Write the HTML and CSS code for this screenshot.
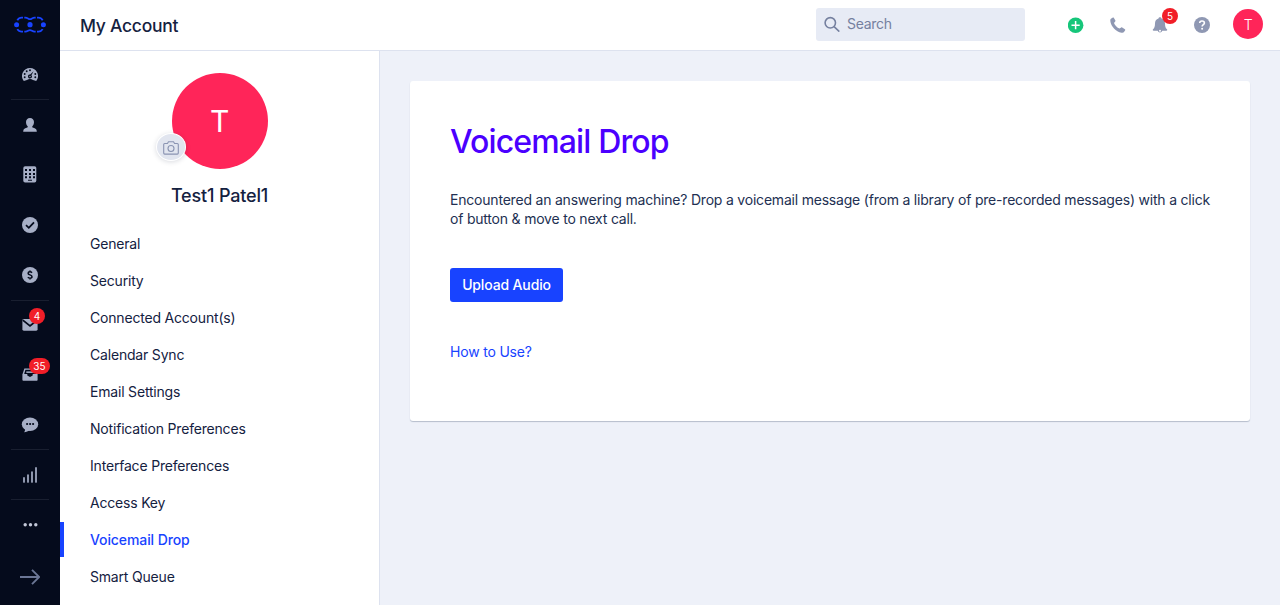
FILE: index.html
```html
<!DOCTYPE html>
<html lang="en">
<head>
<meta charset="utf-8">
<title>My Account</title>
<link rel="stylesheet" href="styles.css">
</head>
<body>
<div class="app">
  <nav class="rail">
    <a class="rail-item logo"><svg width="34" height="18" viewBox="0 0 34 18" fill="none" stroke="#1843ff" stroke-width="1.800"><path d="M4.300 4.200C5.500 2.200 6.600 1.600 8.600 1.600H10M11.300 1.600h1.200c2.200 0 2.700 1.600 4.500 1.600s2.300-1.600 4.500-1.600h1.200M24 1.600h1.400c2 0 3.100.6 4.300 2.600M4.300 13.100c1.200 2 2.300 2.600 4.300 2.600H10M11.300 15.700h1.200c2.200 0 2.700-1.600 4.500-1.600s2.300 1.600 4.500 1.600h1.200M24 15.700h1.400c2 0 3.100-.6 4.300-2.600"/><g fill="#1843ff" stroke="none"><circle cx="3.600" cy="8.700" r="2.500"/><circle cx="17" cy="8.700" r="2.600"/><circle cx="30.400" cy="8.700" r="2.500"/></g></svg></a>
    <a class="rail-item divided"><svg width="16" height="16" viewBox="0 0 16 16"><path fill="#a7afc6" d="M8 1a8 8 0 0 0-6.200 13L5 13.100a4.800 4.800 0 0 1 6 0l3.200.9A8 8 0 0 0 8 1z"/><g fill="#050b1c"><circle cx="8" cy="3.200" r=".95"/><circle cx="4.700" cy="4.300" r=".95"/><circle cx="2.700" cy="7" r=".95"/><circle cx="2.700" cy="10.300" r=".95"/><circle cx="13.300" cy="7" r=".95"/><circle cx="13.300" cy="10.300" r=".95"/><path d="M11.600 4.200 9.400 8.300a1.900 1.900 0 1 1-1.200-.7z"/></g><circle cx="8" cy="9.500" r=".7" fill="#a7afc6"/></svg></a>
    <a class="rail-item"><svg width="16" height="16" viewBox="0 0 16 16" fill="#a7afc6"><path d="M8 1c2.500 0 4 1.700 4 4.100 0 1.700-.6 3.300-1.700 4.200v1c0 .5 3.300.8 4.100 2.400.3.600.4 1.300.4 2H1.200c0-.7.100-1.400.4-2 .8-1.600 4.100-1.900 4.100-2.400v-1C4.600 8.400 4 6.800 4 5.100 4 2.700 5.500 1 8 1z"/></svg></a>
    <a class="rail-item"><svg width="16" height="18" viewBox="0 0 16 18"><rect x="1.300" y=".3" width="13" height="16.200" rx="1.800" fill="#a7afc6"/><g fill="#050b1c"><path d="M3 3h2v2H3zM7 3h2v2H7zM11 3h2v2h-2zM3 7h2v2H3zM7 7h2v2H7zM11 7h2v2h-2zM3 10.300h2v2H3zM7 10.300h2v2H7zM11 10.300h2v2h-2zM6 13.700h4v1H6z"/></g></svg></a>
    <a class="rail-item"><svg width="16" height="16" viewBox="0 0 16 16"><circle cx="8" cy="8" r="8" fill="#a7afc6"/><path d="M4 8.200l2.800 2.600L12 5.300" fill="none" stroke="#050b1c" stroke-width="1.800"/></svg></a>
    <a class="rail-item"><svg width="16" height="16" viewBox="0 0 16 16"><circle cx="8" cy="8" r="8" fill="#a7afc6"/><path d="M10 5.700C9.400 5 8.800 4.800 8 4.800c-1.200 0-1.900.6-1.900 1.400C6.100 8.300 10 7.500 10 9.800c0 .8-.8 1.400-2 1.400-.9 0-1.600-.3-2.200-.9M8 3.400v1.500M8 11v1.600" fill="none" stroke="#050b1c" stroke-width="1.500"/></svg></a>
    <a class="rail-item top-line"><svg width="16" height="16" viewBox="0 0 16 16"><rect x=".4" y="2" width="15.200" height="11.700" rx="1.400" fill="#a7afc6"/><path d="M.8 3.100 8 8.900l7.200-5.800" fill="none" stroke="#050b1c" stroke-width="1.800"/></svg><span class="badge">4</span></a>
    <a class="rail-item"><svg width="16" height="16" viewBox="0 0 16 16"><path fill="#a7afc6" d="M2.400 1.500h11.200l2 6v5.200c0 .6-.4 1-1 1H1.300c-.6 0-.9-.4-.9-1V7.500z"/><path fill="#050b1c" d="M3.400 2.800h9.500l1.200 4.200h-3.400v1.400L8 10 5.300 8.400V7H2.200z"/><path fill="#a7afc6" d="M4.300 4.400h8.400v1.500H4.300z"/></svg><span class="badge wide">35</span></a>
    <a class="rail-item"><svg width="18" height="16" viewBox="0 0 18 16"><ellipse cx="9" cy="7.200" rx="8.200" ry="6.800" fill="#a7afc6"/><path fill="#a7afc6" d="M4 11.500c.2 1.700-.2 2.800-.9 3.700 2.400-.2 4-.9 5.300-2z"/><g fill="#050b1c"><circle cx="6.100" cy="7" r="1.100"/><circle cx="9.100" cy="7" r="1.100"/><circle cx="12.100" cy="7" r="1.100"/></g></svg></a>
    <a class="rail-item framed"><svg width="16" height="16" viewBox="0 0 16 16" fill="none" stroke="#a7afc6" stroke-width="1.700" stroke-linecap="round"><path d="M2 10.900V15M6 8v7M10 5v10M14 .9V15"/></svg></a>
    <a class="rail-item"><svg width="16" height="6" viewBox="0 0 16 6" fill="#c3c8d8"><circle cx="3.200" cy="2.700" r="1.700"/><circle cx="8.500" cy="2.700" r="1.700"/><circle cx="13.800" cy="2.700" r="1.700"/></svg></a>
    <a class="rail-item arrow"><svg width="20" height="16" viewBox="0 0 20 16" fill="none" stroke="#6b7695" stroke-width="1.900"><path d="M0 8h19M12 .8 19.200 8 12 15.200"/></svg></a>
  </nav>
  <div class="main">
    <header class="topbar">
      <h1 class="page-title">My Account</h1>
      <div class="search"><svg width="16" height="16" viewBox="0 0 16 16" fill="none" stroke="#75809f" stroke-width="1.600"><circle cx="6.300" cy="6.800" r="5.200"/><path d="M10.100 10.600l5.200 5"/></svg><span class="placeholder">Search</span></div>
      <div class="actions">
        <a class="action"><svg width="16" height="16" viewBox="0 0 16 16"><circle cx="7.600" cy="8.200" r="7.800" fill="#16c67a"/><path d="M3.500 8.200h8.200M7.600 4.100v8.200" stroke="#fff" stroke-width="1.500"/></svg></a>
        <a class="action"><svg width="16" height="16" viewBox="0 0 16 16" fill="#8f98b3"><path d="M.9 1.800 2.900.6c.4-.2.800-.1 1 .3l1.500 2.700c.2.400.1.800-.2 1L4 5.900c.9 2.400 3 4.700 5.600 5.700l1.600-1.100c.3-.2.700-.2 1 0l2.700 1.800c.4.200.5.600.3.900l-1.200 1.900c-.4.600-1.300.8-2.500.6C5.900 14.700.9 9.300.3 3.900c-.1-1 .1-1.700.6-2.100z"/></svg></a>
        <a class="action"><svg width="16" height="16" viewBox="0 0 16 16" fill="#8f98b3"><path d="M8 .3c.8 0 1.400.5 1.500 1.200 2.300.7 3.500 2.400 3.500 5 0 3.500.8 4.700 2 5.700.5.500.2 1.500-.6 1.500h-4.100a2.400 2.400 0 0 1-4.600 0H1.600c-.8 0-1.100-1-.6-1.500 1.200-1 2-2.200 2-5.700 0-2.600 1.200-4.300 3.500-5C6.600.8 7.200.3 8 .3z"/><circle cx="8" cy="13.700" r="1" fill="#fff"/></svg><span class="badge bell">5</span></a>
        <a class="action"><svg width="16" height="16" viewBox="0 0 16 16"><circle cx="8" cy="8" r="8" fill="#8f98b3"/><path d="M5.700 6.100C5.700 4.700 6.700 4 8 4s2.400.8 2.400 2c0 1.600-2.300 1.700-2.300 3.500" fill="none" stroke="#fff" stroke-width="1.600"/><circle cx="8.100" cy="11.700" r="1" fill="#fff"/></svg></a>
      </div>
      <div class="avatar-small">T</div>
    </header>
    <div class="body">
      <aside class="account">
        <div class="avatar">T<span class="camera"><svg width="16" height="14" viewBox="0 0 16 14" fill="none" stroke="#8a94b2" stroke-width="1.100"><path d="M1.700 2.500h2.700L5.500.7h5l1.100 1.800h2.700c.6 0 1 .4 1 1v8.600c0 .6-.4 1-1 1H1.700c-.6 0-1-.4-1-1V3.500c0-.6.4-1 1-1z"/><circle cx="8" cy="7.500" r="3"/></svg></span></div>
        <h2 class="user-name">Test1 Patel1</h2>
        <ul class="menu">
          <li>General</li>
          <li>Security</li>
          <li>Connected Account(s)</li>
          <li>Calendar Sync</li>
          <li>Email Settings</li>
          <li>Notification Preferences</li>
          <li>Interface Preferences</li>
          <li>Access Key</li>
          <li class="active">Voicemail Drop</li>
          <li>Smart Queue</li>
        </ul>
      </aside>
      <main class="content">
        <section class="card">
          <h2 class="card-title">Voicemail Drop</h2>
          <p class="description">Encountered an answering machine? Drop a voicemail message (from a library of pre-recorded messages) with a click of button &amp; move to next call.</p>
          <button class="upload">Upload Audio</button>
          <a class="help">How to Use?</a>
        </section>
      </main>
    </div>
  </div>
</div>
</body>
</html>
```
FILE: styles.css
```css
* { box-sizing: border-box; }
body { margin: 0; font-family: Inter, "Liberation Sans", sans-serif; font-size: 14px; letter-spacing: -.19px; color: #14213f; overflow: hidden; }
h1, h2, p, ul { margin: 0; padding: 0; }
svg { display: block; flex: none; }
.app { display: flex; height: 605px; }
.rail { width: 60px; flex: none; background: #050b1c; display: flex; flex-direction: column; align-items: center; }
.rail-item { position: relative; width: 38px; height: 50px; flex: none; display: flex; align-items: center; justify-content: center; }
.divided { box-shadow: inset 0 -1px #191f30; }
.top-line { box-shadow: inset 0 1px #191f30; }
.framed { box-shadow: inset 0 -1px #191f30, 0 -1px #191f30; }
.arrow { margin-top: 2px; }
.badge { position: absolute; top: 8px; left: 18px; height: 16px; min-width: 16px; border-radius: 8px; background: #f11e28; color: #fff; font-size: 10px; letter-spacing: 0; line-height: 17px; text-align: center; }
.badge.wide { width: 21px; letter-spacing: .2px; }
.badge.bell { top: -9px; left: 10px; }
.main { flex: 1; display: flex; flex-direction: column; min-width: 0; }
.topbar { height: 51px; flex: none; display: flex; align-items: center; border-bottom: 1px solid #dde2ef; padding: 0 17px 2px 20px; }
.page-title { font-size: 17.5px; font-weight: 500; letter-spacing: -.27px; line-height: 22px; margin: 4px auto 0 0; }
.search { width: 209px; height: 33px; border-radius: 3px; background: #e7ebf5; display: flex; align-items: center; gap: 7px; padding-left: 8px; color: #75809f; }
.placeholder { padding-bottom: 1px; letter-spacing: -.3px; }
.actions { display: flex; gap: 26px; margin: 2px 23px 0 43px; }
.action { position: relative; }
.avatar-small { width: 30px; height: 30px; border-radius: 50%; background: #ff2559; color: #fff; font-weight: 300; display: flex; align-items: center; justify-content: center; }
.body { flex: 1; display: flex; min-height: 0; }
.account { width: 320px; flex: none; border-right: 1px solid #dde2ef; padding-top: 22px; }
.avatar { position: relative; width: 96px; height: 96px; margin: 0 auto; border-radius: 50%; background: #ff2559; color: #fff; font-size: 30px; font-weight: 400; display: flex; align-items: center; justify-content: center; }
.camera { position: absolute; left: -16px; top: 60px; width: 30px; height: 28px; border-radius: 50%; background: #e1e5ef; border: 1px solid #fff; box-shadow: 0 1px 5px rgba(20, 33, 63, .16); display: flex; align-items: center; justify-content: center; padding-top: 2px; }
.user-name { margin-top: 15px; text-align: center; font-size: 18px; font-weight: 500; letter-spacing: -.17px; line-height: 24px; }
.menu { list-style: none; margin-top: 18px; }
.menu li { height: 35px; line-height: 35px; margin-bottom: 2px; padding-left: 26px; border-left: 4px solid transparent; }
.menu .active { border-color: #1843ff; color: #1843ff; font-weight: 500; letter-spacing: -.1px; }
.content { flex: 1; background: #eef1f9; padding: 30px; }
.card { height: 340px; background: #fff; border-radius: 3px; padding: 40px; box-shadow: 0 1px 1px rgba(37, 56, 88, .28); display: flex; flex-direction: column; align-items: flex-start; }
.card-title { font-size: 32px; font-weight: 500; letter-spacing: -.87px; line-height: 40px; color: #4b00ff; padding-top: 1px; }
.description { margin-top: 28px; line-height: 19px; letter-spacing: -.205px; color: #223052; }
.upload { margin-top: 40px; width: 113px; height: 34px; border: 0; border-radius: 3px; background: #1843ff; color: #fff; font: 500 14px Inter, sans-serif; letter-spacing: -.15px; padding: 0 0 1px; }
.help { margin-top: 40px; line-height: 19px; color: #1843ff; }
```
